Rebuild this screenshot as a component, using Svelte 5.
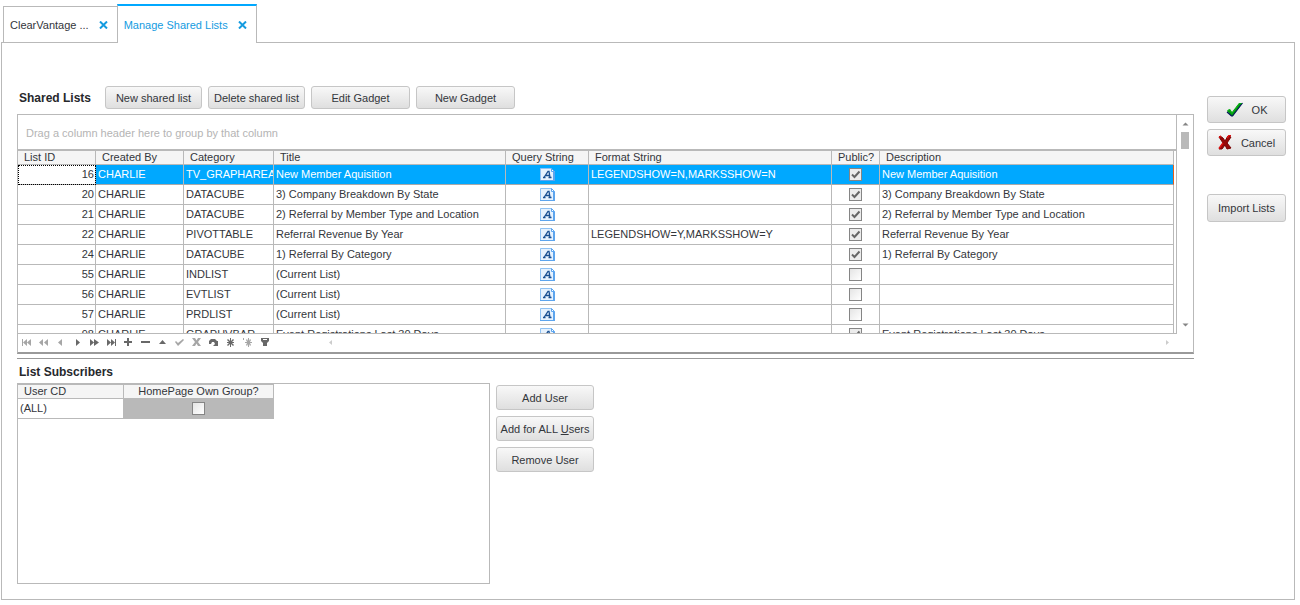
<script>
  const columns = [
    { name: 'List ID', cls: 'id' },
    { name: 'Created By', cls: 'by' },
    { name: 'Category', cls: 'cat' },
    { name: 'Title', cls: 'title' },
    { name: 'Query String', cls: 'query' },
    { name: 'Format String', cls: 'format' },
    { name: 'Public?', cls: 'public' },
    { name: 'Description', cls: 'desc' }
  ];

  const rows = [
    { id: 16, cat: 'TV_GRAPHAREA', title: 'New Member Aquisition', format: 'LEGENDSHOW=N,MARKSSHOW=N', pub: true, desc: 'New Member Aquisition' },
    { id: 20, cat: 'DATACUBE', title: '3) Company Breakdown By State', format: '', pub: true, desc: '3) Company Breakdown By State' },
    { id: 21, cat: 'DATACUBE', title: '2) Referral by Member Type and Location', format: '', pub: true, desc: '2) Referral by Member Type and Location' },
    { id: 22, cat: 'PIVOTTABLE', title: 'Referral Revenue By Year', format: 'LEGENDSHOW=Y,MARKSSHOW=Y', pub: true, desc: 'Referral Revenue By Year' },
    { id: 24, cat: 'DATACUBE', title: '1) Referral By Category', format: '', pub: true, desc: '1) Referral By Category' },
    { id: 55, cat: 'INDLIST', title: '(Current List)', format: '', pub: false, desc: '' },
    { id: 56, cat: 'EVTLIST', title: '(Current List)', format: '', pub: false, desc: '' },
    { id: 57, cat: 'PRDLIST', title: '(Current List)', format: '', pub: false, desc: '' },
    { id: 98, cat: 'GRAPHVBAR', title: 'Event Registrations Last 30 Days', format: '', pub: true, desc: 'Event Registrations Last 30 Days' }
  ];

  const nav = [
    { label: 'First', dim: true, d: 'M1 2h1v7H1zM6 2v7L2 5.5zM10 2v7L6 5.5z' },
    { label: 'Prior page', dim: true, d: 'M5 2v7L1 5.5zM10 2v7L6 5.5z' },
    { label: 'Prior', dim: true, d: 'M7 2v7L3 5.5z' },
    { label: 'Next', d: 'M4 2v7l4-3.5z' },
    { label: 'Next page', d: 'M1 2v7l4-3.5zM5 2v7l5-3.5z' },
    { label: 'Last', d: 'M1 2v7l4-3.5zM5 2v7l4-3.5zM9 2h1v7H9z' },
    { label: 'Insert', d: 'M4 1h2v3h3v2H6v3H4V6H1V4h3z' },
    { label: 'Delete', d: 'M1 4h9v2H1z' },
    { label: 'Edit', d: 'M2 7l3.5-4L9 7z' },
    { label: 'Post', dim: true, d: 'M1 5l1-1 2 2 5-4 1 1-6 6z' },
    { label: 'Cancel edit', dim: true, d: 'M1 1h3l1.500 2.500L7 1h3L7 5l3 4H7L5.500 6.500 4 9H1l3-4z' },
    { label: 'Refresh', d: 'M1 7V4l2-2h4l2 2h1v5H5l2-2-1-2H4L3 7z' },
    { label: 'Save bookmark', d: 'M5 1h1v3l2-2 1 1-2 2h2v1H7l2 2-1 1-2-2v3H5V7L3 9 2 8l2-2H2V5h2L2 3l1-1 2 2z' },
    { label: 'Go to bookmark', dim: true, d: 'M1 1h1v2H1zM6 1h1v3l1-2 1 1-1 2h2v1H8l1 2-1 1-1-2v3H6V7L5 9 4 8l1-2H3V5h2L4 3l1-1 1 2z' },
    { label: 'Filter', d: 'M2 1h8v3L8 6v3H4V6L2 4zM4 2v1h4V2z' }
  ];
</script>

{#snippet closeIcon()}
  <svg width="9" height="8" viewBox="0 0 9 8" aria-hidden="true"><path d="M1 0.500L8 7.500M8 0.500L1 7.500" stroke="#149bdf" stroke-width="2" /></svg>
{/snippet}

<main>
  <nav class="tabs">
    <div class="tab"><a href="#clear">ClearVantage ...</a><button aria-label="Close ClearVantage">{@render closeIcon()}</button></div>
    <div class="tab active"><a href="#shared">Manage Shared Lists</a><button aria-label="Close Manage Shared Lists">{@render closeIcon()}</button></div>
  </nav>

  <section class="panel">
    <div class="content">
      <header>
        <h2>Shared Lists</h2>
        <button class="btn">New shared list</button>
        <button class="btn">Delete shared list</button>
        <button class="btn">Edit Gadget</button>
        <button class="btn">New Gadget</button>
      </header>

      <div class="grid">
        <div class="view">
          <div class="data">
            <div class="group">Drag a column header here to group by that column</div>
            <table>
              <thead>
                <tr>{#each columns as c}<th class={c.cls}>{c.name}</th>{/each}</tr>
              </thead>
              <tbody>
                {#each rows as r, i}
                  <tr class:selected={i === 0}>
                    <td class="num">{r.id}</td>
                    <td>CHARLIE</td>
                    <td>{r.cat}</td>
                    <td>{r.title}</td>
                    <td class="mid">
                      <svg width="15" height="13" viewBox="0 0 15 13" role="img" aria-label="Text">
                        <path d="M0.500 0.500h11l3 3v9h-14z" fill="#e6f2fe" stroke="#8fc2f4" />
                        <path d="M13 4h2v9H0v-1h13z" fill="#5da5ee" />
                        <path d="M11.500 0.500v3h3z" fill="#fff" stroke="#5da5ee" />
                        <path d="M4 9.500L8 3.500h1L10 9.500M6 7.500h4M3 9.500h2.500M8.500 9.500h3" fill="none" stroke="#194f91" stroke-width="1.300" />
                      </svg>
                    </td>
                    <td>{r.format}</td>
                    <td class="mid"><input type="checkbox" checked={r.pub} aria-label="Public" /></td>
                    <td>{r.desc}</td>
                  </tr>
                {/each}
              </tbody>
            </table>
          </div>
          <div class="scroll">
            <button aria-label="Scroll up"><svg width="7" height="4" viewBox="0 0 7 4"><path d="M0.500 3.500L3.500 0.500L6.500 3.500z" /></svg></button>
            <div class="thumb"></div>
            <button class="down" aria-label="Scroll down"><svg width="7" height="4" viewBox="0 0 7 4"><path d="M0.500 0.500h6L3.500 3.500z" /></svg></button>
          </div>
        </div>
        <div class="navigator">
          {#each nav as n}
            <button aria-label={n.label} class:dim={n.dim}><svg width="11" height="11" viewBox="0 0 11 11"><path d={n.d} fill-rule="evenodd" /></svg></button>
          {/each}
          <div class="hscroll">
            <button aria-label="Scroll left"><svg width="3" height="5" viewBox="0 0 3 5"><path d="M3 0v5L0 2.500z" /></svg></button>
            <button aria-label="Scroll right"><svg width="3" height="5" viewBox="0 0 3 5"><path d="M0 0v5l3-2.500z" /></svg></button>
          </div>
        </div>
      </div>

      <div class="splitter"></div>
      <h2>List Subscribers</h2>

      <div class="lower">
        <div class="subs">
          <table>
            <thead><tr><th class="user">User CD</th><th class="own">HomePage Own Group?</th></tr></thead>
            <tbody><tr><td>(ALL)</td><td class="mid focus"><input type="checkbox" aria-label="HomePage Own Group" /></td></tr></tbody>
          </table>
        </div>
        <div class="actions">
          <button class="btn">Add User</button>
          <button class="btn">Add for ALL <u>U</u>sers</button>
          <button class="btn">Remove User</button>
        </div>
      </div>
    </div>

    <aside>
      <button class="btn ok">
        <svg width="17" height="15" viewBox="0 0 17 15" aria-hidden="true"><path d="M1 9l3-2 2 3L13 1h3.500L7 14H5z" fill="#009a0c" /><path d="M1 10l4.500 4h1L16.500 1" fill="none" stroke="#0a1560" stroke-width="1.200" /><path d="M1.500 8.500L3.500 7.500l2.500 4L13.500 1.500h2" fill="none" stroke="#0cb51a" /></svg>
        OK
      </button>
      <button class="btn">
        <svg width="14" height="15" viewBox="0 0 14 15" aria-hidden="true"><path d="M2 1l3 2 2 3 3-5 3 1-4 6 4 5-4 1-2-4-3 4H1l4-6-4-6z" fill="#960808" stroke="#7a0000" /><path d="M1 13.500L5 8M9 3l2-2.500h2M1 2.500L3 1" fill="none" stroke="#e01010" stroke-width="1.500" /></svg>
        Cancel
      </button>
      <button class="btn import">Import Lists</button>
    </aside>
  </section>
</main>

<style>
  :global(body) { margin: 0; background: #fff; }
  main { font: 11px/14px "Liberation Sans", Arial, sans-serif; color: #33363b; padding: 4px 5px 5px 1px; }
  button { font: inherit; color: inherit; padding: 0; border: 0; background: none; }
  svg { display: block; flex: none; }
  .tabs { display: flex; align-items: flex-end; height: 39px; padding-left: 2px; margin-bottom: -1px; position: relative; }
  .tab { box-sizing: border-box; height: 37px; display: flex; align-items: center; gap: 10px; padding: 0 9px 0 6px; border: 1px solid #b9b9b9; border-right: 0; }
  .tab a { color: inherit; text-decoration: none; white-space: nowrap; }
  .tab.active { height: 39px; border-top: 2px solid #00a8ff; border-right: 1px solid #b9b9b9; border-bottom: 0; background: #fff; color: #149bdf; }
  .panel { display: flex; align-items: flex-start; gap: 13px; border: 1px solid #b9b9b9; padding: 43px 8px 15px 15px; }
  .content { flex: 1; min-width: 0; }
  header { display: flex; align-items: center; gap: 6px; }
  h2 { margin: 0; padding-left: 2px; font: bold 12px/14px "Liberation Sans", Arial, sans-serif; color: #26282c; }
  header h2 { width: 80px; }
  .btn { box-sizing: border-box; display: flex; align-items: center; justify-content: center; border: 1px solid #c6c6c6; border-radius: 3px; background: linear-gradient(#f8f8f8, #dfdfdf); white-space: pre; }
  header .btn { width: 99px; height: 23px; }
  header .btn:nth-of-type(-n + 2) { width: 97px; }
  .grid { margin-top: 5px; border: 1px solid #b9b9b9; border-bottom: 2px solid #999; }
  .view { display: flex; height: 219px; }
  .data { flex: 1; min-width: 0; overflow: hidden; border-right: 1px solid #b9b9b9; border-bottom: 1px solid #b9b9b9; box-sizing: border-box; }
  .group { height: 34px; line-height: 36px; padding-left: 8px; border-bottom: 2px solid #b9b9b9; color: #b4b4b4; }
  table { border-spacing: 0; table-layout: fixed; }
  .data table { width: calc(100% - 2px); }
  th, td { box-sizing: border-box; padding: 0 2px; border: solid #b9b9b9; border-width: 0 1px 1px 0; overflow: hidden; white-space: nowrap; text-align: left; font-weight: normal; }
  th { height: 14px; line-height: 13px; padding-left: 6px; background: #f5f5f5; }
  td { height: 20px; line-height: 19px; }
  .id { width: 78px; }
  .by { width: 88px; }
  .cat { width: 90px; }
  .title { width: 232px; }
  .query { width: 83px; }
  .format { width: 243px; }
  .public { width: 48px; }
  .num { text-align: right; padding-right: 1px; }
  .mid svg, .mid input { margin: 0 auto; }
  .selected td { background: #00a8ff; color: #fff; border-bottom-color: #a9a9a9; }
  .selected td:last-child { border-right-color: #e8601c; }
  .selected td.num { background: #fff; color: inherit; outline: 1px dotted #000; outline-offset: -1px; }
  input { appearance: none; display: block; box-sizing: border-box; width: 13px; height: 13px; border: 1px solid #858585; background: linear-gradient(135deg, #e4e4e4, #fff); }
  input:checked { background: url("data:image/svg+xml,%3Csvg xmlns='http://www.w3.org/2000/svg' viewBox='0 0 11 11'%3E%3Cpath d='M2 5.500L4.500 8L9.500 2.500' fill='none' stroke='%23666' stroke-width='2'/%3E%3C/svg%3E") #ececec; }
  .scroll { width: 16px; display: flex; flex-direction: column; align-items: center; padding: 7px 0; box-sizing: border-box; fill: #858585; }
  .thumb { width: 8px; height: 17px; margin-top: 6px; background: #b9b9b9; }
  .down { margin-top: auto; }
  .navigator { height: 18px; box-sizing: border-box; display: flex; align-items: center; gap: 6px; padding: 0 0 2px 3px; fill: #686868; }
  .dim { fill: #a6a6a6; }
  .hscroll { flex: 1; display: flex; justify-content: space-between; padding: 0 24px 0 53px; fill: #ccc; }
  .splitter { margin: 4px 0 6px; border-top: 1px solid #999; }
  .lower { display: flex; gap: 6px; margin-top: 4px; }
  .subs { box-sizing: border-box; width: 473px; min-height: 201px; border: 1px solid #b9b9b9; }
  .subs table { width: 256px; }
  .subs th { height: 15px; border-top-width: 1px; }
  .user { width: 106px; }
  .own { width: 150px; text-align: center; padding: 0; }
  .focus { background: #b9b9b9; }
  .actions { display: flex; flex-direction: column; gap: 6px; padding-top: 2px; }
  .actions .btn { width: 98px; height: 25px; }
  aside { width: 79px; display: flex; flex-direction: column; gap: 6px; padding-top: 10px; }
  aside .btn { height: 27px; gap: 6px; }
  aside .import { height: 28px; margin-top: 32px; }
</style>
